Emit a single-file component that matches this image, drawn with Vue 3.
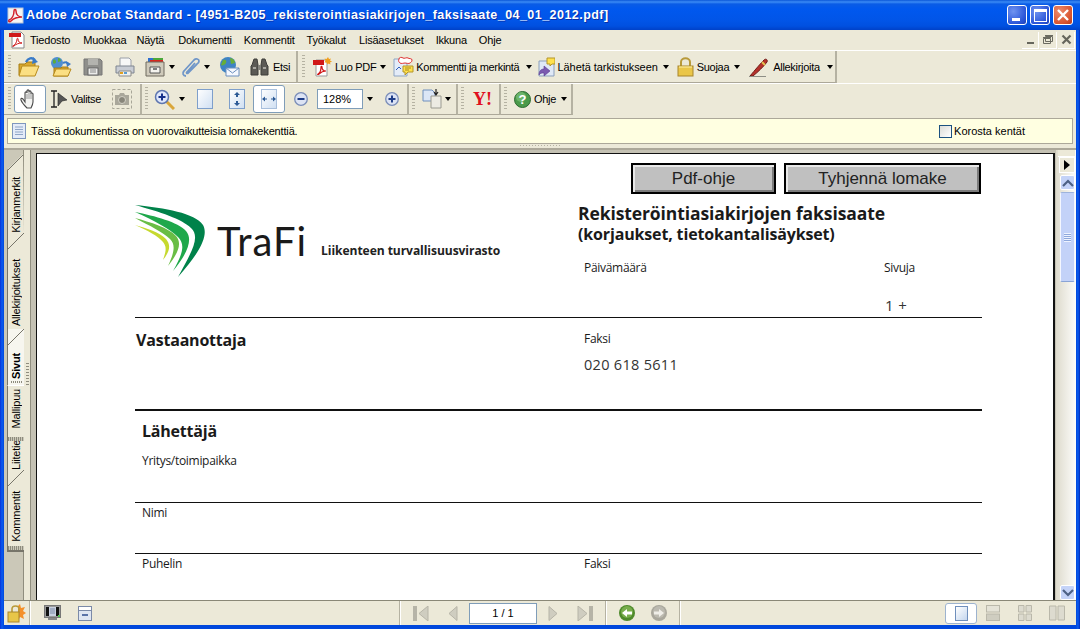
<template>
  <div class="win">
    <header class="title">
      <svg class="tlogo" width="17" height="17" viewBox="0 0 17 17"><rect x="1" y="1" width="15" height="15" fill="#f4f4f4" stroke="#b9c6d8"/><path d="M2 13c3-1 5-5 5-9 0-2 2-2 2 0 0 4 3 6 6 6-4 0-8 1-11 4-1 1-3 1-2-1z" fill="none" stroke="#d3202a" stroke-width="1.5"/></svg>
      <span class="ttext">Adobe Acrobat Standard - [4951-B205_rekisterointiasiakirjojen_faksisaate_04_01_2012.pdf]</span>
      <span class="wbtns">
        <span class="wb"><i class="w-min"></i></span>
        <span class="wb"><i class="w-max"></i></span>
        <span class="wb close"><svg width="14" height="14" viewBox="0 0 14 14"><path d="M2 2l10 10M12 2L2 12" stroke="#fff" stroke-width="2.4"/></svg></span>
      </span>
    </header>
    <div class="frame">
      <nav class="menu">
        <svg class="mpdf" width="18" height="18" viewBox="0 0 18 18"><path d="M4 1h9l3 3v13H4z" fill="#fff" stroke="#888"/><rect x="1" y="2" width="12" height="4" fill="#d01818"/><path d="M5 15c2-1 4-4 4-7 0-1 1-1 1 0 0 3 2 4 4 4-3 0-6 1-8 3-1 1-2 0-1 0z" fill="none" stroke="#d01818"/></svg>
        <span class="mi m0">Tiedosto</span><span class="mi m1">Muokkaa</span><span class="mi m2">Näytä</span><span class="mi m3">Dokumentti</span><span class="mi m4">Kommentit</span><span class="mi m5">Työkalut</span><span class="mi m6">Lisäasetukset</span><span class="mi m7">Ikkuna</span><span class="mi m8">Ohje</span>
        <span class="dbtns">
          <span class="db"><i class="d-min"></i></span>
          <span class="db"><svg width="12" height="11" viewBox="0 0 12 11"><path d="M3.5 2.500h7v5h-7zM1.500 4.500h7v5h-7z" fill="#ece9d8" stroke="#6a6a60"/><path d="M3 1.500h8M1 3.500h8" stroke="#6a6a60"/></svg></span>
          <span class="db"><svg width="11" height="11" viewBox="0 0 11 11"><path d="M1.500 1.500l8 8M9.500 1.500l-8 8" stroke="#66665c" stroke-width="2.200"/></svg></span>
        </span>
      </nav>

      <div class="bar one">
        <div class="grp g1">
          <i class="grip"></i>
          <svg class="ic s7" width="22" height="20" viewBox="0 0 22 20"><path d="M1 7h6l2-2h8v13H1z" fill="#d9a82e" stroke="#a67c14"/><path d="M1 19l3-10h17l-4 10z" fill="#fbdf83" stroke="#b88b1d"/><path d="M8 5c2-4 6-5 9-2" stroke="#3a7bc8" stroke-width="2.400" fill="none"/><path d="M15 0l5 5-6 2z" fill="#3a7bc8"/></svg>
          <svg class="ic s10" width="22" height="20" viewBox="0 0 22 20"><circle cx="7" cy="6" r="6" fill="#4f8fd0"/><path d="M3 3c2-1 3 0 3 2s-3 2-3 1zM8 1c2 0 3 2 3 3l-3 1z" fill="#5cab3d"/><path d="M4 11h7l1-1h6v9H4z" fill="#d9a82e" stroke="#a67c14"/><path d="M3 19l3-7h15l-3 7z" fill="#fbdf83" stroke="#b88b1d"/><path d="M13 6c2-1 4-1 5 1" stroke="#3a7bc8" stroke-width="2" fill="none"/><path d="M16 4l5 3-4 3z" fill="#3a7bc8"/></svg>
          <svg class="ic s11" width="20" height="20" viewBox="0 0 20 20"><path d="M1 2h16l2 2v14H1z" fill="#8f8f8b" stroke="#777"/><rect x="5" y="2" width="10" height="6" fill="#b3b3ae"/><rect x="5" y="11" width="10" height="7" fill="#ececea" stroke="#666"/><path d="M7 13h6M7 15h6" stroke="#888"/></svg>
          <svg class="ic s12" width="20" height="20" viewBox="0 0 20 20"><path d="M5 1h9l2 2v7H5z" fill="#f7f7f7" stroke="#9a9fa8"/><path d="M1 9h18v7H1z" fill="#c8ccd4" stroke="#7e8590"/><path d="M4 14h12v5H4z" fill="#f2f2ee" stroke="#8a8a88"/><path d="M5 16h3" stroke="#e0a020" stroke-width="2"/><path d="M9 16h3" stroke="#5a9cd0" stroke-width="2"/></svg>
          <svg class="ic s10" width="21" height="20" viewBox="0 0 21 20"><path d="M3 1h6v5H3z" fill="#2f6fd0"/><path d="M8 1h5v5H8z" fill="#4ba83a"/><path d="M13 1h5v5h-5z" fill="#4ba83a"/><path d="M5 3h13v4H5z" fill="#d8261e"/><path d="M1 5h18v14H1z" fill="#cfcabb" stroke="#6e6a5e"/><path d="M5 10h10v6H5z" fill="#f4f3ee" stroke="#555"/><path d="M8 12h4" stroke="#555" stroke-width="1.500"/></svg>
          <i class="caret c3"></i>
          <svg class="ic s6" width="20" height="20" viewBox="0 0 20 20"><path d="M5 19c-3 0-4-3-2-5L13 3c2-2 5-1 5 1 0 1 0 2-2 3L7 16c-1 1-2 0-1-1l8-9" fill="none" stroke="#6f96c8" stroke-width="1.800"/></svg>
          <i class="caret c3"></i>
          <svg class="ic s9" width="21" height="20" viewBox="0 0 21 20"><circle cx="9" cy="8" r="8" fill="#3e83c4"/><path d="M4 3c3-1 4 1 3 3s-4 3-5 2zM11 1c3 0 5 3 5 5l-4 1z" fill="#67ae38"/><path d="M7 11h13v8H7z" fill="#f5f8ff" stroke="#6b8ebd"/><path d="M7 11l6.500 5 6.500-5" fill="none" stroke="#6b8ebd"/></svg>
          <svg class="ic s10" width="19" height="20" viewBox="0 0 19 20"><path d="M2 8l2-6h3l1 6v10H1V9zM17 8l-2-6h-3l-1 6v10h7V9z" fill="#5b5a55" stroke="#3d3c39"/><rect x="8" y="8" width="3" height="5" fill="#85847e"/><path d="M3 11h3M13 11h3" stroke="#aaa9a2" stroke-width="2"/></svg>
          <span class="lb s4">Etsi</span>
        </div>
        <div class="grp g2">
          <i class="grip"></i>
          <svg class="ic s7" width="20" height="20" viewBox="0 0 20 20"><path d="M4 3h11v16H4z" fill="#fff" stroke="#999"/><rect x="1" y="3" width="11" height="5" fill="#d01818"/><path d="M6 17c2-1 3-4 3-7 0-1 1-1 1 0 0 3 2 4 4 4-3 0-5 1-7 3-1 1-2 0-1 0z" fill="none" stroke="#d01818" stroke-width="1.200"/><path d="M16 0l1 2 2-.500-1 2 2 1-2 1 .500 2-2-1-1 1-1-2-2 0 1-2-1-2 2 .500z" fill="#f0a020"/></svg>
          <span class="lb s3">Luo PDF</span>
          <i class="caret c4"></i>
          <svg class="ic s7" width="21" height="21" viewBox="0 0 21 21"><path d="M1 3h13v17H1z" fill="#e4ecf8" stroke="#8ea5c4"/><path d="M6 3c0-2 3-2 4-1s4-1 5 0 4 0 4 2-1 2-2 3-4 0-5 0-4 1-5 0-2-2-1-4z" fill="#fff" stroke="#e03030"/><path d="M3 14l3-3 2 2" fill="none" stroke="#2f5fc0"/><path d="M10 10h10v6h-5l-3 3v-3h-2z" fill="#ffe14d" stroke="#b3952a"/><path d="M12 12h6M12 14h4" stroke="#a88a20"/></svg>
          <span class="lb s2">Kommentti ja merkintä</span>
          <i class="caret c7"></i>
          <svg class="ic s6" width="17" height="20" viewBox="0 0 17 20"><path d="M1 4h15v15H1z" fill="#dfe8f6" stroke="#8b9fbc"/><path d="M9 1h8v6h-3l-2 2V7H9z" fill="#ffe14d" stroke="#b3952a"/><path d="M1 18c0-4 2-6 5-6V9l6 5-6 5v-3c-2 0-4 0-5 2z" fill="#7b5ab0" stroke="#5b3a90" stroke-width=".6"/></svg>
          <span class="lb s2 wide">Lähetä tarkistukseen</span>
          <i class="caret c5"></i>
          <svg class="ic s8" width="17" height="20" viewBox="0 0 17 20"><path d="M4 10V5c0-5 9-5 9 0v5" fill="none" stroke="#b89a3a" stroke-width="2"/><rect x="1" y="9" width="15" height="10" fill="#eac648" stroke="#a8862a"/><path d="M2 10h13" stroke="#fff2a8"/></svg>
          <span class="lb s3">Suojaa</span>
          <i class="caret c5"></i>
          <svg class="ic s9" width="20" height="20" viewBox="0 0 20 20"><path d="M1 19c5-6 11-13 14-16 2-2 4 0 3 2-3 4-9 10-14 14z" fill="#b5302a" stroke="#6f1a16"/><path d="M13 5l3 3" stroke="#e3c050" stroke-width="2"/><path d="M0 19.500h17" stroke="#8e8e86"/></svg>
          <span class="lb s4">Allekirjoita</span>
          <i class="caret c7"></i>
        </div>
      </div>

      <div class="bar two">
        <div class="grp h1">
          <i class="grip"></i>
          <span class="tbtn hand"><svg width="20" height="20" viewBox="0 0 20 20"><path d="M7 19c-2-2-5-5-6-8-.5-2 1-2 2-1l2 3V4c0-1.500 2-1.500 2 0V2c0-1.500 2-1.500 2 0v1c0-1.500 2-1.500 2 0v2c0-1.500 2-1 2 0v8c0 2-1 4-2 6z" fill="#f4f4f2" stroke="#4a4a4a" stroke-width="1.100"/><path d="M7 5v5M9 3v7M11 4v6" stroke="#9a9a9a"/></svg></span>
          <svg class="ic s4" width="17" height="18" viewBox="0 0 17 18"><path d="M1 1h6M1 17h6M4 1v16" stroke="#222" stroke-width="1.300" fill="none"/><path d="M8 3l9 7-5 1-4 5z" fill="#555" stroke="#222" stroke-width=".6"/></svg>
          <span class="lb s4">Valitse</span>
          <svg class="ic s11" width="20" height="20" viewBox="0 0 20 20"><rect x=".5" y=".5" width="19" height="19" fill="none" stroke="#a8a698" stroke-dasharray="3 2"/><path d="M3 6h4l1-2h4l1 2h4v10H3z" fill="#a9a79b"/><circle cx="10" cy="11" r="3.500" fill="#88867b" stroke="#d3d1c6"/></svg>
        </div>
        <div class="grp h2">
          <i class="grip"></i>
          <svg class="ic s6" width="21" height="21" viewBox="0 0 21 21"><path d="M12 12l8 8" stroke="#d9a63a" stroke-width="3"/><circle cx="8" cy="8" r="6.500" fill="#dfe7fb" stroke="#5e76b0" stroke-width="1.500"/><path d="M4.500 8h7M8 4.500v7" stroke="#16308a" stroke-width="2"/></svg>
          <i class="caret c4"></i>
          <svg class="ic s12" width="16" height="20" viewBox="0 0 16 20"><rect x=".5" y=".5" width="15" height="19" fill="url(#pg)" stroke="#7e9fcb"/><defs><linearGradient id="pg" x1="0" y1="0" x2="1" y2="1"><stop offset="0" stop-color="#fff"/><stop offset="1" stop-color="#cfdff2"/></linearGradient></defs></svg>
          <svg class="ic s16" width="16" height="20" viewBox="0 0 16 20"><rect x=".5" y=".5" width="15" height="19" fill="url(#pg)" stroke="#7e9fcb"/><path d="M8 3l3 3H9v2H7V6H5zM8 17l3-3H9v-2H7v2H5z" fill="#2c5a96"/></svg>
          <span class="tbtn fit"><svg width="16" height="20" viewBox="0 0 16 20"><rect x=".5" y=".5" width="15" height="19" fill="url(#pg)" stroke="#a8bfdc"/><path d="M1 10l3-2.500v5zM15 10l-3-2.500v5zM4 9.500h2v1H4zM10 9.500h2v1h-2z" fill="#2c5a96"/></svg></span>
          <svg class="ic s9" width="14" height="14" viewBox="0 0 14 14"><circle cx="7" cy="7" r="6.300" fill="#dce3f4" stroke="#7a8db8" stroke-width="1.300"/><path d="M3.500 7h7" stroke="#1d3c88" stroke-width="2"/></svg>
          <span class="pct">128%</span>
          <i class="caret c4"></i>
          <svg class="ic s12" width="14" height="14" viewBox="0 0 14 14"><circle cx="7" cy="7" r="6.300" fill="#dce3f4" stroke="#7a8db8" stroke-width="1.300"/><path d="M3.500 7h7M7 3.500v7" stroke="#1d3c88" stroke-width="2"/></svg>
        </div>
        <div class="grp h3">
          <i class="grip"></i>
          <svg class="ic s7" width="20" height="20" viewBox="0 0 20 20"><path d="M1 1h9l3 3v8H1z" fill="#dbe6f6" stroke="#6f8fbc"/><path d="M9 7h10v12H9z" fill="#ecebe3" stroke="#9a9a90"/><path d="M14 0v5M12 3l2 3 2-3" stroke="#222" stroke-width="1.200" fill="none"/></svg>
          <i class="caret c3"></i>
        </div>
        <div class="grp h4">
          <i class="grip"></i>
          <span class="yh">Y!</span>
        </div>
        <div class="grp h5">
          <i class="grip"></i>
          <svg class="ic s7" width="17" height="17" viewBox="0 0 17 17"><circle cx="8.500" cy="8.500" r="8" fill="#4a9a4a" stroke="#2c6a30"/><circle cx="7" cy="6" r="5" fill="#8ed08a" opacity=".5"/><text x="8.500" y="13" text-anchor="middle" class="qm">?</text></svg>
          <span class="lb s3">Ohje</span>
          <i class="caret c5"></i>
        </div>
      </div>

      <div class="msg">
        <svg width="14" height="16" viewBox="0 0 14 16"><rect x=".5" y=".5" width="13" height="15" fill="#e4ecf8" stroke="#7f98bd"/><path d="M3 4h8M3 6.500h8M3 9h8M3 11.500h8" stroke="#8ea6c6"/></svg>
        <span class="msgt">Tässä dokumentissa on vuorovaikutteisia lomakekenttiä.</span>
        <span class="chk"></span>
        <span class="chkl">Korosta kentät</span>
      </div>
      <div class="split"><i class="hgrip"></i></div>

      <div class="main">
        <aside class="tabs">
          <div class="tab t1 first"><span>Kirjanmerkit</span></div>
          <div class="tab t2"><span>Allekirjoitukset</span></div>
          <div class="tab t3 on"><span>Sivut</span><i class="tg"></i></div>
          <div class="tab t4 nd"><span>Mallipuu</span><i class="tg"></i></div>
          <div class="tab t5 nd"><span>Liitetiedostot</span><i class="tg"></i></div>
          <div class="tab t6"><span>Kommentit</span><i class="tg"></i></div>
        </aside>
        <div class="gut"><i class="vgrip"></i></div>
        <div class="docwrap">
          <div class="page">
            <div class="btnrow"><span class="pb b1">Pdf-ohje</span><span class="pb b2">Tyhjennä lomake</span></div>
            <div class="sheet">
              <section class="head">
                <div class="brand">
                  <svg class="swoosh" width="74" height="73" viewBox="0 0 74 73">
                    <path d="M0 0C30 3 60 8 68 20c5 9 0 24-25 52C56 48 66 32 56 23 47 14 25 7 0 0z" fill="#00824a"/>
                    <path d="M0 7C20 11 43 17 51 26c7 8 2 22-13 40 9-16 13-26 5-34C35 24 20 16 0 7z" fill="#1fa84b"/>
                    <path d="M0 13C15 17 34 23 41 31c6 7 3 16-8 30 6-13 8-21 2-27C28 27 15 21 0 13z" fill="#69bd45"/>
                    <path d="M0 20C11 23 24 27 31 34c5 6 4 12-3 21 3-9 4-13 0-18C23 31 12 25 0 20z" fill="#c6d92f"/>
                  </svg>
                  <span class="tr">TraFi</span>
                  <span class="tag">Liikenteen turvallisuusvirasto</span>
                </div>
                <div class="hr">
                  <h1>Rekisteröintiasiakirjojen faksisaate</h1>
                  <h2>(korjaukset, tietokantalisäykset)</h2>
                  <div class="pair lbl"><span>Päivämäärä</span><span>Sivuja</span></div>
                  <div class="pair val"><span></span><span>1 +</span></div>
                </div>
              </section>
              <section class="recv">
                <h3>Vastaanottaja</h3>
                <div class="fax"><div class="small">Faksi</div><div class="num">020 618 5611</div></div>
              </section>
              <section class="send">
                <h3>Lähettäjä</h3>
                <div class="small row r1">Yritys/toimipaikka</div>
                <div class="small row r2">Nimi</div>
                <div class="small row r3"><span class="pc">Puhelin</span><span>Faksi</span></div>
              </section>
            </div>
          </div>
        </div>
        <div class="scroll">
          <i class="sb0"></i>
          <span class="navarrow"><i></i></span>
          <span class="sbtn"><svg width="12" height="8" viewBox="0 0 12 8"><path d="M1 7l5-5 5 5" fill="none" stroke="#4d6185" stroke-width="2.200"/></svg></span>
          <span class="thumb"><i></i></span>
          <span class="fill"></span>
          <span class="sbtn"><svg width="12" height="8" viewBox="0 0 12 8"><path d="M1 1l5 5 5-5" fill="none" stroke="#4d6185" stroke-width="2.200"/></svg></span>
        </div>
      </div>

      <footer class="status">
        <svg class="slock" width="19" height="19" viewBox="0 0 19 19"><path d="M13 0l1 4 4-1-2 4 3 2-3 2 1 4-4-2-2 4V2z" fill="#f5902a"/><path d="M5 9V5c0-4 7-4 7 0v4" fill="none" stroke="#b89a3a" stroke-width="1.600"/><rect x="1" y="8" width="11" height="10" fill="#e8c648" stroke="#a8862a"/></svg>
        <i class="sep s29"></i>
        <svg class="smon" width="17" height="16" viewBox="0 0 17 16"><rect x=".5" y=".5" width="16" height="12" fill="#9a9a9a" stroke="#777"/><rect x="2" y="2" width="13" height="9" fill="#111"/><rect x="5" y="2" width="7" height="9" fill="#c8d0e0"/><path d="M6 4h5M6 6h5M6 8h5" stroke="#7d8aa6"/><path d="M4 14h9" stroke="#888" stroke-width="2"/><rect x="14" y="10" width="2" height="2" fill="#52c652"/></svg>
        <svg class="swin" width="14" height="15" viewBox="0 0 14 15"><rect x=".5" y=".5" width="13" height="14" fill="#dfe6f2" stroke="#7b8aa8"/><path d="M1 4.500h12" stroke="#7b8aa8"/><rect x="1" y="1" width="12" height="3" fill="#fff"/><rect x="4" y="8" width="6" height="2" fill="#5a73a8"/></svg>
        <i class="sep s399"></i>
        <svg class="n1" width="16" height="15" viewBox="0 0 16 15"><rect width="4" height="15" fill="#b6b4a7"/><path d="M15 0v15L6 7.500z" fill="#cfcdc0" stroke="#b6b4a7"/></svg>
        <svg class="n2" width="10" height="15" viewBox="0 0 10 15"><path d="M9 .5v14L1 7.500z" fill="#cfcdc0" stroke="#b6b4a7"/></svg>
        <span class="pgf">1 / 1</span>
        <svg class="n3" width="10" height="15" viewBox="0 0 10 15"><path d="M1 .5v14l8-7z" fill="#cfcdc0" stroke="#b6b4a7"/></svg>
        <svg class="n4" width="16" height="15" viewBox="0 0 16 15"><rect x="12" width="4" height="15" fill="#b6b4a7"/><path d="M1 0v15l9-7.500z" fill="#cfcdc0" stroke="#b6b4a7"/></svg>
        <i class="sep s605"></i>
        <svg class="n5" width="16" height="16" viewBox="0 0 16 16"><circle cx="8" cy="8" r="8" fill="#4f8a2c"/><circle cx="8" cy="7" r="6" fill="#78ad4c"/><path d="M3 8l5-4v2.500h5v3H8V12z" fill="#fff"/></svg>
        <svg class="n6" width="16" height="16" viewBox="0 0 16 16"><circle cx="8" cy="8" r="8" fill="#a9a79c"/><circle cx="8" cy="7" r="6" fill="#bcbab0"/><path d="M13 8L8 4v2.500H3v3h5V12z" fill="#efeee8"/></svg>
        <i class="sep s679"></i>
        <span class="vbtn"><i></i></span>
        <svg class="v2" width="14" height="16" viewBox="0 0 14 16"><rect x=".5" y=".5" width="13" height="6.500" fill="#e5e3d7" stroke="#bab8aa"/><rect x=".5" y="9" width="13" height="6.500" fill="#cfcdc0" stroke="#bab8aa"/></svg>
        <svg class="v3" width="14" height="16" viewBox="0 0 14 16"><path d="M.5.500h5.500v6.500H.5zM8 .5h5.500v6.500H8zM.5 9h5.500v6.500H.5zM8 9h5.500v6.500H8z" fill="#dddbcf" stroke="#bab8aa"/></svg>
        <svg class="v4" width="16" height="16" viewBox="0 0 16 16"><path d="M.5 1h6.500v14H.5zM9 1h6.500v14H9z" fill="#dddbcf" stroke="#bab8aa"/></svg>
      </footer>
    </div>
  </div>
</template>

<script setup>
</script>

<style>
html, body { margin: 0; padding: 0; background: #0a3fd0; overflow: hidden; }
</style>

<style scoped>
.win { width: 1080px; height: 629px; display: flex; flex-direction: column; overflow: hidden; font-family: "Liberation Sans", Arial, sans-serif; font-size: 11px; color: #000; background: linear-gradient(to right, #0831d9 0, #0a5cf0 2px, #0047dc 4px, #0047dc 1076px, #0a5cf0 1078px, #0028b8 1080px); }
.title { height: 30px; flex: none; display: flex; align-items: center; padding: 0 7px 0 7px; background: linear-gradient(to bottom, #0a57d8 0, #3b8bf5 2px, #0a5ce6 4px, #0058ee 9px, #0155e8 20px, #0050e0 26px, #0041c8 30px); box-sizing: border-box; }
.tlogo { flex: none; margin-right: 2px; }
.ttext { color: #fff; font-weight: 700; font-size: 12.5px; letter-spacing: 0.46px; white-space: nowrap; text-shadow: 1px 1px 0 #0a2fa8; }
.wbtns { margin-left: auto; display: flex; gap: 3px; }
.wb { width: 20px; height: 20px; box-sizing: border-box; border: 1px solid #fff; border-radius: 3px; background: radial-gradient(circle at 30% 30%, #6f93f0, #2a55d8 70%, #1c3fb8); display: flex; align-items: center; justify-content: center; position: relative; }
.wb.close { background: radial-gradient(circle at 30% 30%, #ee8c6c, #d8532e 70%, #b83a1c); }
.w-min { width: 8px; height: 3px; background: #fff; margin-top: 9px; margin-right: 3px; }
.w-max { width: 11px; height: 9px; border: 1px solid #fff; border-top-width: 3px; }
.frame { width: 1072px; margin-left: 4px; height: 595px; background: #ece9d8; display: flex; flex-direction: column; }

.menu { height: 20px; flex: none; display: flex; align-items: center; position: relative; background: #ece9d8; }
.mpdf { margin-left: 4px; flex: none; }
.mi { font-size: 11px; white-space: nowrap; letter-spacing: -0.2px; }
.m0 { margin-left: 4px; } .m1 { margin-left: 13px; } .m2 { margin-left: 10px; } .m3 { margin-left: 14px; } .m4 { margin-left: 12px; } .m5 { margin-left: 12px; } .m6 { margin-left: 13px; } .m7 { margin-left: 12px; } .m8 { margin-left: 12px; }
.dbtns { margin-left: auto; margin-right: 1px; display: flex; gap: 1px; }
.db { width: 17px; height: 17px; background: #ece9d8; border-right: 1px solid #fff; border-bottom: 1px solid #fff; box-sizing: border-box; display: flex; align-items: center; justify-content: center; }
.d-min { width: 7px; height: 2px; background: #66665c; margin-top: 7px; }

.bar { display: flex; flex: none; height: 32px; border-top: 1px solid #fff; box-sizing: content-box; }
.bar.two { height: 31px; }
.grp { display: flex; align-items: center; box-sizing: border-box; height: 100%; border-right: 2px solid #b5b2a2; border-bottom: 1px solid #aca899; padding-left: 3px; }
.g1 { width: 294px; padding-left: 4px; }
.g2 { width: 539px; padding-left: 4px; }
.h1 { width: 138px; padding-left: 4px; }
.h2 { width: 267px; }
.h3 { width: 49px; }
.h4 { width: 43px; }
.h5 { width: 72px; }
.grip { width: 3px; height: 24px; flex: none; background: repeating-linear-gradient(to bottom, #b5b2a2 0 1px, transparent 1px 3px); }
.ic { flex: none; display: block; }
.lb { white-space: nowrap; font-size: 11px; letter-spacing: -0.3px; }
.wide { letter-spacing: -0.06px; }
.caret { flex: none; width: 0; height: 0; border-left: 3.5px solid transparent; border-right: 3.5px solid transparent; border-top: 4px solid #000; }
.c3 { margin-left: 3px; } .c4 { margin-left: 4px; } .c5 { margin-left: 5px; } .c7 { margin-left: 7px; }
.s2 { margin-left: 2px; } .s3 { margin-left: 3px; } .s4 { margin-left: 4px; } .s5 { margin-left: 5px; } .s6 { margin-left: 6px; } .s7 { margin-left: 7px; } .s8 { margin-left: 8px; } .s9 { margin-left: 9px; } .s10 { margin-left: 10px; } .s11 { margin-left: 11px; } .s12 { margin-left: 12px; } .s16 { margin-left: 16px; }
.tbtn { flex: none; width: 32px; height: 28px; box-sizing: border-box; background: #fff; border: 1px solid #7f9db9; border-radius: 3px; display: flex; align-items: center; justify-content: center; }
.hand { margin-left: 3px; }
.fit { margin-left: 8px; }
.pct { flex: none; width: 46px; height: 20px; box-sizing: border-box; border: 1px solid #7f9db9; background: #fff; line-height: 18px; padding-left: 5px; margin-left: 9px; font-size: 11px; }
.yh { color: #e01020; font-family: "Liberation Serif", serif; font-weight: 700; font-size: 18px; margin-left: 9px; letter-spacing: 0; }
.qm { font-family: "Liberation Sans", sans-serif; font-weight: 700; font-size: 13px; fill: #fff; }

.msg { height: 26px; flex: none; margin: 3px 3px 0; box-sizing: border-box; border: 1px solid #aca899; background: #ffffe1; display: flex; align-items: center; padding-left: 4px; }
.msgt { margin-left: 5px; font-size: 11px; letter-spacing: -0.16px; }
.chk { width: 13px; height: 13px; box-sizing: border-box; border: 1px solid #1c5180; background: linear-gradient(135deg, #dcdcd7, #fff); margin-left: auto; }
.chkl { margin-left: 2px; margin-right: 47px; font-size: 11px; }
.split { height: 6px; flex: none; display: flex; justify-content: center; border-bottom: 2px solid #aca899; box-sizing: border-box; }
.hgrip { width: 40px; height: 1px; margin-top: 1px; background: repeating-linear-gradient(to right, #b5b2a2 0 1px, transparent 1px 3px); }

.main { height: 450px; flex: none; display: flex; }
.tabs { width: 20px; flex: none; box-sizing: border-box; padding: 4px 0 0 3px; background: #cbc8b8; border-right: 1px solid #8f8d7e; display: flex; flex-direction: column; }
.tab { width: 17px; box-sizing: border-box; background: #ece9d8; border-left: 1px solid #77756a; position: relative; overflow: hidden; display: flex; flex-direction: column; justify-content: flex-end; flex: none; }
.tab span { writing-mode: vertical-rl; transform: rotate(180deg); font-size: 11px; line-height: 16px; white-space: nowrap; flex: none; letter-spacing: -0.2px; }
.tab::before { content: ""; position: absolute; left: 0; top: 0; width: 16px; height: 16px; background: linear-gradient(to bottom right, transparent 48%, #77756a 48%, #77756a 53%, transparent 53%); }
.first { clip-path: polygon(0 16px, 16px 0, 100% 100%, 0 100%); }
.t1 { height: 79px; padding-bottom: 0; }
.t2 { height: 96px; padding-bottom: 3px; }
.t3 { height: 56px; padding-bottom: 6px; background: #f7f6ef; }
.t3 span { font-weight: 700; }
.t4 { height: 56px; padding-bottom: 13px; }
.t5 { height: 29px; padding-bottom: 0; }
.t6 { height: 82px; padding-bottom: 8px; border-bottom: 2px solid #77756a; }
.nd::before { display: none; }
.t4 { border-top: 1px solid #fff; }
.t5 .tg { display: none; }
.tg { position: absolute; left: 3px; bottom: 2px; width: 11px; height: 2px; background: repeating-linear-gradient(to right, #8e8c7e 0 1px, transparent 1px 2px); }
.t4 .tg { bottom: 0; left: 0; width: 16px; height: 4px; background-color: #cbc8b8; }
.t6 .tg { bottom: 0; left: 0; width: 16px; height: 4px; background-color: #cbc8b8; }
.gut { width: 6px; flex: none; background: #ece9d8; display: flex; flex-direction: column; align-items: center; padding-top: 213px; box-sizing: border-box; }
.vgrip { width: 3px; height: 22px; background: repeating-linear-gradient(to bottom, #8e8c7e 0 1px, transparent 1px 3px); }
.docwrap { width: 1026px; flex: none; box-sizing: border-box; background: #c4c1b3; border-left: 1px solid #8f8d7e; padding: 3px 0 0 5px; overflow: hidden; }
.page { width: 1019px; height: 460px; box-sizing: border-box; border: solid #111; border-width: 1px 2px 0 1px; background: #fff; font-family: "Open Sans", "Noto Sans", sans-serif; color: #1a1a1a; overflow: hidden; }
.btnrow { display: flex; gap: 8px; padding: 9px 0 0 594px; height: 31px; }
.pb { box-sizing: border-box; height: 31px; border: 2px solid #000; box-shadow: inset 2px 2px 0 #e8e8e8, inset -2px -2px 0 #7c7c7c; background: #c0c0c0; font-family: "Liberation Sans", sans-serif; font-size: 17px; color: #222; display: flex; align-items: center; justify-content: center; }
.b1 { width: 145px; } .b2 { width: 197px; }
.sheet { margin-left: 98px; width: 847px; }
.head { height: 124px; box-sizing: border-box; border-bottom: 1px solid #111; display: flex; }
.brand { width: 443px; flex: none; display: flex; align-items: flex-start; padding-top: 11px; box-sizing: border-box; }
.swoosh { flex: none; }
.tr { font-family: Lato, sans-serif; font-weight: 400; font-size: 40px; line-height: 38px; color: #1a1a1a; margin: 17px 0 0 8px; letter-spacing: 1px; }
.tag { font-family: "Open Sans", sans-serif; font-weight: 700; font-size: 12.1px; line-height: 14px; color: #222; margin: 39px 0 0 14px; white-space: nowrap; letter-spacing: -0.08px; }
.hr { flex: 1; padding-top: 9px; }
h1 { margin: 0; font-size: 17.5px; line-height: 21px; font-weight: 700; white-space: nowrap; letter-spacing: -0.1px; }
h2 { margin: 0; font-size: 16px; line-height: 20px; font-weight: 700; white-space: nowrap; letter-spacing: -0.15px; }
.pair { display: flex; padding-left: 6px; }
.pair span:first-child { width: 300px; }
.lbl { font-size: 12px; line-height: 16px; margin-top: 16px; letter-spacing: -0.3px; font-weight: 400; }
.val { font-size: 15px; line-height: 20px; margin-top: 19px; padding-left: 7px; color: #333; word-spacing: 1px; letter-spacing: -0.1px; }
.recv { height: 93px; box-sizing: border-box; border-bottom: 2px solid #111; display: flex; }
.recv h3 { width: 448px; margin: 11px 0 0 1px; }
h3 { font-size: 16px; line-height: 22px; font-weight: 700; letter-spacing: -0.2px; }
.fax { padding-top: 13px; }
.small { font-size: 12px; line-height: 16px; letter-spacing: -0.3px; }
.num { font-size: 14.5px; line-height: 20px; margin-top: 8px; letter-spacing: 0.3px; color: #333; }
.send h3 { margin: 9px 0 0 7px; }
.row { padding-left: 7px; box-sizing: border-box; }
.r1 { margin-top: 11px; height: 50px; border-bottom: 1px solid #111; }
.r2 { height: 51px; padding-top: 2px; border-bottom: 1px solid #111; }
.r3 { display: flex; padding-top: 2px; }
.pc { width: 442px; }

.scroll { width: 20px; flex: none; display: flex; flex-direction: column; align-items: flex-end; background: linear-gradient(to right, #dedbcd, #fdfdfb); }
.sb0 { width: 17px; height: 7px; background: #ece9d8; border-bottom: 1px solid #fff; flex: none; box-sizing: border-box; margin-right: 1px; }
.navarrow { width: 16px; height: 16px; margin: 0 1px 2px 0; flex: none; background: #ece9d8; border: solid #fff; border-width: 1px; box-sizing: border-box; display: flex; align-items: center; justify-content: center; }
.navarrow i { width: 0; height: 0; border-top: 5px solid transparent; border-bottom: 5px solid transparent; border-left: 6px solid #000; }
.sbtn { width: 15px; height: 15px; margin-right: 1px; flex: none; box-sizing: border-box; background: #c4d3f8; border: 1px solid #fff; border-radius: 2px; display: flex; align-items: center; justify-content: center; }
.thumb { width: 15px; height: 90px; margin: 2px 1px 0 0; flex: none; box-sizing: border-box; background: #c3d2f8; border: 1px solid #f4f7ff; border-top-color: #9db3dc; border-bottom-color: #8aa4d6; border-radius: 2px; display: flex; align-items: center; justify-content: center; }
.thumb i { width: 7px; height: 9px; background: repeating-linear-gradient(to bottom, #eef3ff 0 1px, #8ea8dc 1px 2px); }
.fill { flex: 1; }

.status { height: 25px; flex: none; box-sizing: border-box; border-top: 1px solid #8a8877; background: #ece9d8; display: flex; align-items: center; }
.sep { width: 1px; height: 100%; flex: none; background: #b5b2a2; border-right: 1px solid #fff; }
.slock { margin-left: 3px; flex: none; }
.s29 { margin-left: 3px; }
.smon { margin-left: 13px; flex: none; }
.swin { margin-left: 17px; flex: none; }
.s399 { margin-left: 307px; }
.n1 { margin-left: 12px; flex: none; } .n2 { margin-left: 19px; flex: none; }
.pgf { width: 68px; height: 21px; box-sizing: border-box; margin-left: 11px; border: 1px solid #7f9db9; background: #fff; text-align: center; line-height: 19px; font-size: 11px; flex: none; }
.n3 { margin-left: 11px; flex: none; } .n4 { margin-left: 19px; flex: none; }
.s605 { margin-left: 12px; }
.n5 { margin-left: 12px; flex: none; } .n6 { margin-left: 16px; flex: none; }
.s679 { margin-left: 12px; }
.vbtn { margin-left: 264px; width: 32px; height: 21px; box-sizing: border-box; background: #fff; border: 1px solid #9db3cf; border-radius: 3px; display: flex; align-items: center; justify-content: center; flex: none; }
.vbtn i { width: 13px; height: 15px; box-sizing: border-box; border: 1px solid #6f8fbc; background: linear-gradient(135deg, #fff, #c4d6ee); }
.v2 { margin-left: 9px; flex: none; } .v3 { margin-left: 18px; flex: none; } .v4 { margin-left: 17px; flex: none; }
</style>
